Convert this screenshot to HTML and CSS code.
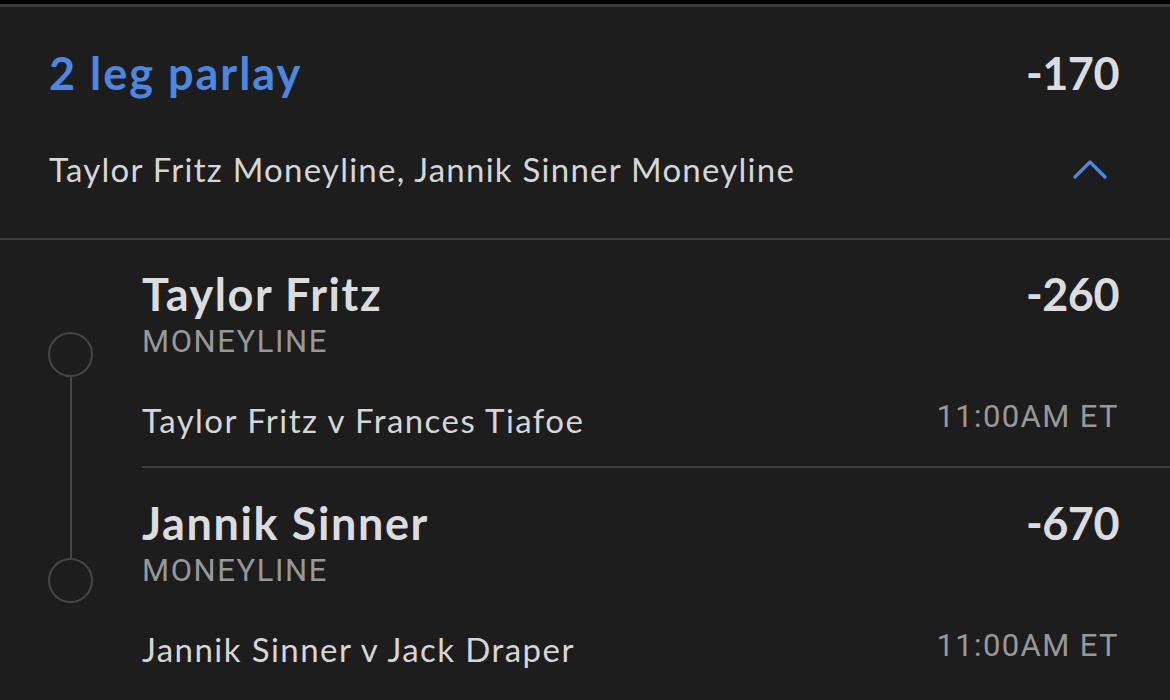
FILE: index.html
```html
<!DOCTYPE html>
<html lang="en">
<head>
<meta charset="utf-8">
<title>2 leg parlay</title>
<link rel="stylesheet" href="styles.css">
</head>
<body>
<div class="sheet">
  <header class="parlay-head">
    <div class="head-row">
      <h1 class="parlay-title">2 leg parlay</h1>
      <span class="odds">-170</span>
    </div>
    <div class="head-row sub-row">
      <p class="parlay-summary">Taylor Fritz Moneyline, Jannik Sinner Moneyline</p>
      <svg class="chevron" width="34" height="20" viewBox="0 0 34 20" aria-hidden="true">
        <path d="M2 18 L17 3 L32 18" fill="none" stroke="#4a88e2" stroke-width="3.2" stroke-linecap="round" stroke-linejoin="round"/>
      </svg>
    </div>
  </header>

  <section class="legs">
    <div class="leg first">
      <div class="rail">
        <div class="rail-gap"></div>
        <div class="rail-dot"></div>
        <div class="rail-line grow"></div>
      </div>
      <div class="leg-body">
        <div class="leg-row">
          <span class="leg-name">Taylor Fritz</span>
          <span class="odds">-260</span>
        </div>
        <div class="market">MONEYLINE</div>
        <div class="leg-row match-row">
          <span class="match">Taylor Fritz v Frances Tiafoe</span>
          <span class="time">11:00AM ET</span>
        </div>
      </div>
    </div>

    <div class="leg second">
      <div class="rail">
        <div class="rail-line top"></div>
        <div class="rail-dot"></div>
        <div class="rail-gap grow"></div>
      </div>
      <div class="leg-body divided">
        <div class="leg-row">
          <span class="leg-name">Jannik Sinner</span>
          <span class="odds">-670</span>
        </div>
        <div class="market">MONEYLINE</div>
        <div class="leg-row match-row">
          <span class="match">Jannik Sinner v Jack Draper</span>
          <span class="time">11:00AM ET</span>
        </div>
      </div>
    </div>
  </section>
</div>
</body>
</html>
```

FILE: styles.css
```css
* { box-sizing: border-box; }

html, body {
  margin: 0;
  padding: 0;
  background: #000;
}

body {
  padding-top: 4px;
  font-family: "Lato", "Open Sans", sans-serif;
  color: #dcdcdf;
}

.sheet {
  background: #1d1d1d;
  border-top: 3px solid #3b3b3b;
  height: 696px;
}

.parlay-head {
  padding: 40px 51px 49px 49px;
  border-bottom: 2px solid #3c3c3c;
}

.head-row {
  display: flex;
  justify-content: space-between;
  align-items: center;
}

.parlay-title {
  margin: 0;
  font-size: 45px;
  line-height: 52px;
  font-weight: 700;
  letter-spacing: 2px;
  color: #4a88e2;
}

.odds {
  font-size: 45px;
  line-height: 52px;
  font-weight: 700;
  color: #dcdcdf;
  letter-spacing: -0.5px;
}

.sub-row {
  margin-top: 50px;
}

.parlay-summary {
  margin: 0;
  font-size: 33px;
  line-height: 40px;
  font-weight: 400;
  letter-spacing: 1.25px;
  color: #d6d6d8;
}

.chevron {
  display: block;
  margin-right: 12px;
}

.legs {
  display: flex;
  flex-direction: column;
}

.leg {
  display: flex;
  height: 228px;
}

.leg.first {
  height: 226px;
}

.rail {
  width: 142px;
  flex: none;
  display: flex;
  flex-direction: column;
}

.rail-gap {
  height: 92px;
}

.rail-dot {
  width: 45px;
  height: 45px;
  margin-left: 48px;
  border: 2px solid #454545;
  border-radius: 50%;
  flex: none;
}

.rail-line {
  width: 2px;
  margin-left: 69.5px;
  background: #454545;
}

.rail-line.top {
  height: 92px;
  flex: none;
}

.grow {
  flex: 1;
}

.leg-body {
  flex: 1;
  padding: 28px 51px 0 0;
}

.leg-body.divided {
  border-top: 2px solid #3c3c3c;
  padding-top: 29px;
}

.leg-row {
  display: flex;
  justify-content: space-between;
  align-items: flex-start;
}

.leg-name {
  font-size: 45px;
  line-height: 52px;
  font-weight: 700;
  letter-spacing: 1.6px;
  color: #dcdcdf;
}

.market {
  margin-top: 4px;
  font-family: "Roboto", "Noto Sans", sans-serif;
  font-size: 31px;
  line-height: 36px;
  letter-spacing: 1.6px;
  color: #98989b;
}

.match-row {
  margin-top: 40px;
}

.match {
  font-size: 33px;
  line-height: 40px;
  letter-spacing: 1.45px;
  color: #d6d6d8;
}

.time {
  font-family: "Roboto", "Noto Sans", sans-serif;
  font-size: 31px;
  line-height: 34px;
  letter-spacing: 1.4px;
  color: #98989b;
}
```
